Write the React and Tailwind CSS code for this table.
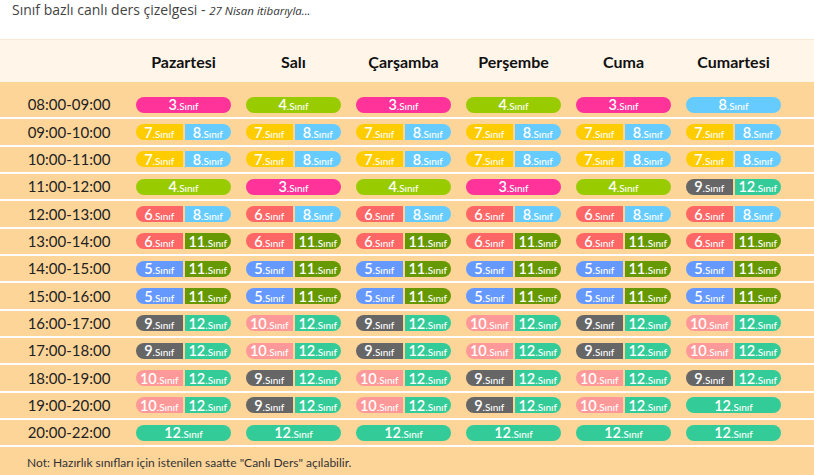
const colors = {
  3: 'bg-[#ff3399]',
  4: 'bg-[#99cc00]',
  5: 'bg-[#6699ff]',
  6: 'bg-[#ff6666]',
  7: 'bg-[#ffcc00]',
  8: 'bg-[#66ccff]',
  9: 'bg-[#666666]',
  10: 'bg-[#ff9999]',
  11: 'bg-[#669900]',
  12: 'bg-[#33cc99]',
}

const days = ['Pazartesi', 'Salı', 'Çarşamba', 'Perşembe', 'Cuma', 'Cumartesi']

const rows = [
  ['08:00-09:00', [[3], [4], [3], [4], [3], [8]]],
  ['09:00-10:00', [[7, 8], [7, 8], [7, 8], [7, 8], [7, 8], [7, 8]]],
  ['10:00-11:00', [[7, 8], [7, 8], [7, 8], [7, 8], [7, 8], [7, 8]]],
  ['11:00-12:00', [[4], [3], [4], [3], [4], [9, 12]]],
  ['12:00-13:00', [[6, 8], [6, 8], [6, 8], [6, 8], [6, 8], [6, 8]]],
  ['13:00-14:00', [[6, 11], [6, 11], [6, 11], [6, 11], [6, 11], [6, 11]]],
  ['14:00-15:00', [[5, 11], [5, 11], [5, 11], [5, 11], [5, 11], [5, 11]]],
  ['15:00-16:00', [[5, 11], [5, 11], [5, 11], [5, 11], [5, 11], [5, 11]]],
  ['16:00-17:00', [[9, 12], [10, 12], [9, 12], [10, 12], [9, 12], [10, 12]]],
  ['17:00-18:00', [[9, 12], [10, 12], [9, 12], [10, 12], [9, 12], [10, 12]]],
  ['18:00-19:00', [[10, 12], [9, 12], [10, 12], [9, 12], [10, 12], [9, 12]]],
  ['19:00-20:00', [[10, 12], [9, 12], [10, 12], [9, 12], [10, 12], [12]]],
  ['20:00-22:00', [[12], [12], [12], [12], [12], [12]]],
]

function Label({ n }) {
  return (
    <span className="text-white leading-none whitespace-nowrap">
      <span className="text-[14.5px] font-semibold">{n}</span>
      <span className="text-[10px] font-medium">.Sınıf</span>
    </span>
  )
}

function Cell({ classes }) {
  if (classes.length === 1) {
    return (
      <div className={`h-4 rounded-full flex items-center justify-center ${colors[classes[0]]}`}>
        <Label n={classes[0]} />
      </div>
    )
  }
  return (
    <div className="h-4 flex gap-[2px]">
      <div className={`flex-1 rounded-l-full flex items-center justify-center ${colors[classes[0]]}`}>
        <Label n={classes[0]} />
      </div>
      <div className={`flex-1 rounded-r-full flex items-center justify-center ${colors[classes[1]]}`}>
        <Label n={classes[1]} />
      </div>
    </div>
  )
}

export default function App() {
  return (
    <div className="w-[814px] h-[475px] overflow-hidden bg-white text-[#333] font-['Lato','Noto_Sans',sans-serif]">
      <div className="h-[39px] pl-3 leading-[19px] text-[14px] font-medium text-[#444] font-['Open_Sans',sans-serif]">
        Sınıf bazlı canlı ders çizelgesi - <span className="text-[11.5px] italic font-normal text-[#333]">27 Nisan itibarıyla...</span>
      </div>
      <div className="h-[43px] bg-[#fff5e9] border-t border-[#f8e8d4] grid grid-cols-[121px_repeat(6,95px)] gap-x-[15px] items-center pt-[2px]">
        <div />
        {days.map(d => (
          <div key={d} className="text-center text-[16px] font-bold text-[#111]">{d}</div>
        ))}
      </div>
      <div className="h-[393px] bg-[#fed599] pt-[10px]">
        {rows.map(([time, cells]) => (
          <div key={time} className="h-[27.33px] border-b-2 border-white grid grid-cols-[121px_repeat(6,95px)] gap-x-[15px] items-center">
            <div className="pl-[17px] text-center text-[15px] text-[#222]">{time}</div>
            {cells.map((c, i) => <Cell key={i} classes={c} />)}
          </div>
        ))}
        <div className="pl-[27px] pt-[7px] text-[12px] text-[#333]">
          Not: Hazırlık sınıfları için istenilen saatte "Canlı Ders" açılabilir.
        </div>
      </div>
    </div>
  )
}
